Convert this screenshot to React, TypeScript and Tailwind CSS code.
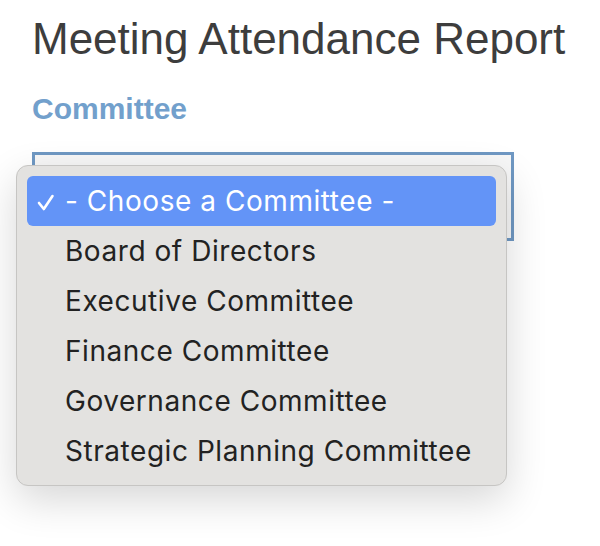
import React from "react";

const items = [
  "Board of Directors",
  "Executive Committee",
  "Finance Committee",
  "Governance Committee",
  "Strategic Planning Committee",
];

export default function App() {
  return (
    <div className="relative w-[600px] h-[546px] bg-white overflow-hidden">
      <div className="pl-[32px] pt-[17px]">
        <h1
          className="text-[44px] leading-[44px] text-[#3d3d3d] font-normal"
          style={{ fontFamily: '"Liberation Sans", Arial, sans-serif' }}
        >
          Meeting Attendance Report
        </h1>
        <div
          className="mt-[33px] text-[30px] leading-[30px] font-bold text-[#72a0cc]"
          style={{ fontFamily: '"Liberation Sans", Arial, sans-serif' }}
        >
          Committee
        </div>
        <div className="mt-[28px] w-[482px] h-[89px] border-[3px] border-[#6f98c3] bg-[#f7f7f7]" />
      </div>

      <div className="absolute left-[16px] top-[165px] w-[491px] h-[321px] rounded-[12px] border border-[#c6c5c3] bg-[#e3e2e0] shadow-[0_14px_40px_rgba(0,0,0,0.16)] px-[10px] py-[10px]">
        <div
          className="flex flex-col text-[28px] tracking-[0.55px] text-[#222222]"
          style={{ fontFamily: 'Inter, "Noto Sans", sans-serif' }}
        >
          <div className="relative h-[50px] leading-[50px] rounded-[6px] bg-[#6394f7] text-white pl-[38px]">
            <svg
              className="absolute left-[10px] top-[18px]"
              width="18"
              height="17"
              viewBox="0 0 18 17"
              fill="none"
            >
              <path
                d="M2 9 L6.8 15 L15.5 2"
                stroke="white"
                strokeWidth="2.6"
                strokeLinecap="round"
                strokeLinejoin="round"
              />
            </svg>
            - Choose a Committee -
          </div>
          {items.map((t) => (
            <div key={t} className="h-[50px] leading-[50px] pl-[38px]">
              {t}
            </div>
          ))}
        </div>
      </div>
    </div>
  );
}
